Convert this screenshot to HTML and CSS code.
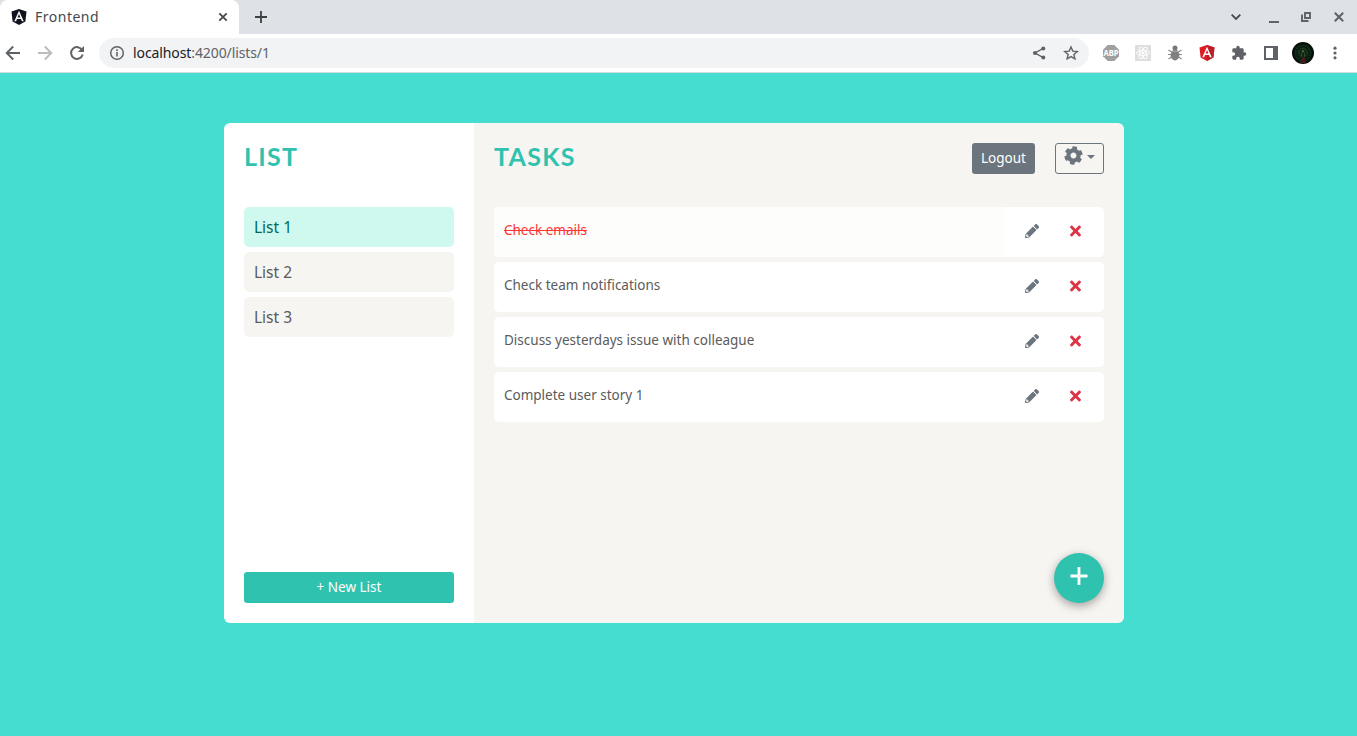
FILE: index.html
```html
<!DOCTYPE html>
<html lang="en">
<head>
<meta charset="utf-8">
<title>Frontend</title>
<link rel="stylesheet" href="styles.css">
</head>
<body>
<svg class="defs" width="0" height="0" aria-hidden="true">
  <symbol id="pencil" viewBox="0 0 512 512"><path d="M497.900 142.100l-46.100 46.100c-4.700 4.700-12.300 4.700-17 0l-111-111c-4.700-4.700-4.700-12.300 0-17l46.100-46.100c18.700-18.700 49.100-18.700 67.900 0l60.100 60.100c18.800 18.700 18.800 49.100 0 67.900zM284.200 99.800L21.600 362.400.4 483.900c-2.900 16.400 11.400 30.600 27.800 27.800l121.500-21.300 262.600-262.600c4.700-4.700 4.700-12.300 0-17l-111-111c-4.800-4.700-12.400-4.700-17.100 0zM88 424h48v36.300l-64.500 11.300-31.100-31.100L51.700 376H88v48z"/></symbol>
  <symbol id="times" viewBox="0 0 352 512"><path d="M242.720 256l100.070-100.070c12.280-12.280 12.280-32.190 0-44.480l-22.240-22.240c-12.280-12.280-32.190-12.280-44.480 0L176 189.280 75.930 89.210c-12.280-12.280-32.190-12.280-44.480 0L9.210 111.450c-12.280 12.280-12.280 32.190 0 44.480L109.280 256 9.210 356.070c-12.280 12.280-12.280 32.190 0 44.480l22.240 22.240c12.280 12.280 32.200 12.280 44.480 0L176 322.720l100.070 100.070c12.280 12.280 32.200 12.280 44.480 0l22.240-22.240c12.280-12.280 12.280-32.190 0-44.480L242.720 256z"/></symbol>
</svg>

<header class="browser">
  <div class="tab-strip">
    <div class="tab">
      <svg class="favicon" viewBox="0 0 16 16" width="16" height="16"><path d="M8 0l7.5 2.6-1.1 10L8 16l-6.4-3.4-1.1-10z" fill="#11131f"/><path d="M8 1.8L3.3 12.3h1.8l.9-2.3h4l.9 2.3h1.8zm0 3.3l1.4 3.4H6.6z" fill="#fff"/></svg>
      <span class="tab-title">Frontend</span>
      <svg class="tab-close" viewBox="0 0 10 10" width="10" height="10"><path d="M1.3 1.3l7.4 7.4M8.7 1.3L1.3 8.7" stroke="#45494d" stroke-width="1.8"/></svg>
    </div>
    <svg class="new-tab" viewBox="0 0 12 12" width="12" height="12"><path d="M6 0v12M0 6h12" stroke="#3c4043" stroke-width="1.8"/></svg>
    <div class="window-controls">
      <svg width="12" height="16" viewBox="0 0 12 16"><path d="M1.7 5.7L6 10l4.3-4.3" fill="none" stroke="#45494d" stroke-width="1.8"/></svg>
      <svg width="12" height="16" viewBox="0 0 12 16"><path d="M1 13h10" stroke="#5f6368" stroke-width="2"/></svg>
      <svg width="12" height="16" viewBox="0 0 12 16"><path d="M5 4h5v5H5zM2 5.500v6.500h6.500" fill="none" stroke="#5f6368" stroke-width="1.9"/></svg>
      <svg width="12" height="16" viewBox="0 0 12 16"><path d="M1.8 3.8l8.4 8.4M10.2 3.8l-8.4 8.4" stroke="#5f6368" stroke-width="2"/></svg>
    </div>
  </div>
  <div class="toolbar">
    <div class="nav">
      <svg width="16" height="16" viewBox="0 0 16 16"><path d="M15 8H2M8.2 1.5L1.7 8l6.5 6.5" fill="none" stroke="#5f6368" stroke-width="1.9"/></svg>
      <svg width="16" height="16" viewBox="0 0 16 16"><path d="M1 8h13M7.8 1.5L14.3 8l-6.5 6.5" fill="none" stroke="#babcbe" stroke-width="1.9"/></svg>
      <svg width="16" height="16" viewBox="0 0 16 16"><path d="M13.2 5.2A5.9 5.9 0 1 0 13.7 9.5" fill="none" stroke="#5f6368" stroke-width="2"/><path d="M15 .9v6.2H8.8z" fill="#5f6368"/></svg>
    </div>
    <div class="omnibox">
      <svg width="16" height="16" viewBox="0 0 16 16"><circle cx="8" cy="8" r="6.3" fill="none" stroke="#5f6368" stroke-width="1.5"/><path d="M8 7v4.4M8 4.2v1.7" stroke="#5f6368" stroke-width="1.6"/></svg>
      <span class="url"><b>localhost</b>:4200/lists/1</span>
      <svg class="share" width="16" height="16" viewBox="0 0 16 16"><path d="M12.3 3.3L4 8l8.3 4.7" fill="none" stroke="#5f6368" stroke-width="1.4"/><circle cx="12.3" cy="3.4" r="2" fill="#5f6368"/><circle cx="4" cy="8" r="2.1" fill="#5f6368"/><circle cx="12.3" cy="12.6" r="2" fill="#5f6368"/></svg>
      <svg width="16" height="16" viewBox="0 0 16 16"><path d="M8 2l1.800 4.100 4.500.4-3.400 3 1 4.400L8 11.600l-3.900 2.300 1-4.400-3.400-3 4.500-.4z" fill="none" stroke="#5f6368" stroke-width="1.4"/></svg>
    </div>
    <div class="extensions">
      <svg width="16" height="16" viewBox="0 0 16 16"><path d="M4.700 0h6.600L16 4.700v6.600L11.300 16H4.700L0 11.300V4.700z" fill="#a0a0a0"/><text class="abp" x="8" y="11.200" text-anchor="middle" textLength="15" lengthAdjust="spacingAndGlyphs">ABP</text></svg>
      <svg width="16" height="16" viewBox="0 0 16 16"><path d="M0 0h16v16H0z" fill="#dedede"/><g fill="none" stroke="#fff" stroke-width=".9"><ellipse cx="8" cy="8" rx="6.5" ry="2.5"/><ellipse cx="8" cy="8" rx="6.5" ry="2.5" transform="rotate(60 8 8)"/><ellipse cx="8" cy="8" rx="6.5" ry="2.5" transform="rotate(120 8 8)"/></g><circle cx="8" cy="8" r="1.3" fill="#fff"/></svg>
      <svg width="16" height="16" viewBox="0 0 16 16"><path d="M4.500 7L1.500 5M4 9.500H1M4.500 12l-3 2M11.500 7l3-2M12 9.500h3M11.500 12l3 2" stroke="#8a8a8a" stroke-width="1.200"/><circle cx="8" cy="3" r="2.500" fill="#777"/><ellipse cx="8" cy="10" rx="4.400" ry="5.400" fill="#808080"/><path d="M4.600 6.200h6.800" stroke="#aaa"/></svg>
      <svg width="16" height="16" viewBox="0 0 16 16"><path d="M8 0l7.5 2.6-1.1 10L8 16l-6.4-3.4-1.1-10z" fill="#dd1b24"/><path d="M8 0l7.5 2.6-1.1 10L8 16z" fill="#b9202b"/><path d="M8 1.8L3.3 12.3h1.8l.9-2.3h4l.9 2.3h1.8zm0 3.3l1.4 3.4H6.6z" fill="#fff"/></svg>
      <svg width="16" height="16" viewBox="0 0 24 24"><path d="M20.5 11H19V7c0-1.1-.9-2-2-2h-4V3.500a2.500 2.500 0 0 0-5 0V5H4c-1.100 0-2 .9-2 2v3.800h1.500a2.700 2.700 0 0 1 0 5.400H2V20c0 1.100.9 2 2 2h3.800v-1.500a2.700 2.700 0 0 1 5.400 0V22H17c1.100 0 2-.9 2-2v-4h1.500a2.500 2.500 0 0 0 0-5z" fill="#5f6368"/></svg>
      <svg width="16" height="16" viewBox="0 0 16 16"><path d="M1 1h14v14H1zM3 3v10h7V3z" fill="#5f6368" fill-rule="evenodd"/></svg>
    </div>
    <svg class="avatar" width="22" height="22" viewBox="0 0 22 22"><circle cx="11" cy="11" r="11" fill="#06100a"/><circle cx="11" cy="11" r="6.500" fill="#0c2210"/><circle cx="11" cy="11" r="7.600" fill="none" stroke="#17351b" stroke-width="2" stroke-dasharray="1.200 .8"/><circle cx="11" cy="10.500" r="4.200" fill="none" stroke="#1d4524"/><path d="M9.300 14.500L9.800 9q1.200-2 2.400 0l.5 5.500z" fill="#4d7049"/><path d="M10.200 15v-4.500q.8-1.500 1.600 0V15z" fill="#071009"/><path d="M8 21l2-5 1-1.500 2 2 1 4.500z" fill="#4a1a1c"/></svg>
    <svg class="menu" width="4" height="16" viewBox="0 0 4 16"><g fill="#5f6368"><circle cx="2" cy="3.200" r="1.600"/><circle cx="2" cy="8" r="1.600"/><circle cx="2" cy="12.800" r="1.600"/></g></svg>
  </div>
</header>

<main class="page">
  <section class="card">
    <aside class="sidebar">
      <h1 class="title">LIST</h1>
      <nav class="lists">
        <a class="list-item active">List 1</a>
        <a class="list-item">List 2</a>
        <a class="list-item">List 3</a>
      </nav>
      <button class="btn new-list">+ New List</button>
    </aside>
    <div class="content">
      <div class="content-head">
        <h1 class="title">TASKS</h1>
        <button class="btn logout">Logout</button>
        <button class="btn settings">
          <svg width="19" height="19" viewBox="0 0 512 512"><path fill="#6c757d" transform="rotate(9 256 256)" d="M487.4 315.7l-42.6-24.6c4.3-23.2 4.3-47 0-70.2l42.6-24.6c4.9-2.8 7.1-8.6 5.5-14-11.1-35.6-30-67.8-54.7-94.6-3.8-4.1-10-5.1-14.8-2.3L380.8 110c-17.9-15.4-38.5-27.3-60.8-35.1V25.8c0-5.6-3.9-10.5-9.4-11.7-36.7-8.2-74.3-7.8-109.2 0-5.5 1.2-9.4 6.1-9.4 11.7V75c-22.2 7.9-42.8 19.8-60.8 35.1L88.7 85.5c-4.9-2.8-11-1.9-14.8 2.3-24.7 26.7-43.6 58.9-54.7 94.6-1.7 5.4.6 11.2 5.5 14L67.3 221c-4.3 23.2-4.3 47 0 70.2l-42.6 24.6c-4.9 2.8-7.1 8.6-5.5 14 11.1 35.6 30 67.8 54.7 94.6 3.8 4.1 10 5.1 14.8 2.3l42.6-24.6c17.9 15.4 38.5 27.3 60.8 35.1v49.2c0 5.6 3.9 10.5 9.4 11.7 36.7 8.2 74.3 7.8 109.2 0 5.5-1.2 9.4-6.1 9.4-11.7v-49.2c22.2-7.9 42.8-19.8 60.8-35.1l42.6 24.6c4.9 2.8 11 1.9 14.8-2.3 24.7-26.7 43.6-58.9 54.7-94.6 1.5-5.5-.7-11.3-5.6-14.1zM256 336c-44.1 0-80-35.9-80-80s35.9-80 80-80 80 35.9 80 80-35.9 80-80 80z"/></svg>
          <span class="caret"></span>
        </button>
      </div>
      <div class="tasks">
        <div class="task done"><span class="task-name">Check emails</span><div class="actions"><svg class="edit"><use href="#pencil"/></svg><svg class="delete"><use href="#times"/></svg></div></div>
        <div class="task"><span class="task-name">Check team notifications</span><div class="actions"><svg class="edit"><use href="#pencil"/></svg><svg class="delete"><use href="#times"/></svg></div></div>
        <div class="task"><span class="task-name">Discuss yesterdays issue with colleague</span><div class="actions"><svg class="edit"><use href="#pencil"/></svg><svg class="delete"><use href="#times"/></svg></div></div>
        <div class="task"><span class="task-name">Complete user story 1</span><div class="actions"><svg class="edit"><use href="#pencil"/></svg><svg class="delete"><use href="#times"/></svg></div></div>
      </div>
      <button class="fab" aria-label="Add task"><svg width="18" height="18" viewBox="0 0 18 18"><path d="M9 0v18M.5 9h17" stroke="#fff" stroke-width="2.800"/></svg></button>
    </div>
  </section>
</main>
</body>
</html>
```
FILE: styles.css
```css
* { box-sizing: border-box; }
body {
  margin: 0;
  height: 736px;
  overflow: hidden;
  display: flex;
  flex-direction: column;
  font-family: "Noto Sans", "Open Sans", sans-serif;
  color: #5b5b5b;
  background: #44ddd0;
}
svg { display: block; flex: none; }
.defs { position: absolute; }
button { font: inherit; margin: 0; padding: 0; border: 0; }

.browser { flex: none; height: 73px; background: #fff; border-bottom: 1px solid #d5dbdc; }
.tab-strip { display: flex; align-items: center; height: 34px; background: #dee1e6; }
.tab {
  display: flex;
  align-items: center;
  width: 239px;
  height: 34px;
  padding: 0 11px;
  background: #fff;
  border-radius: 8px 8px 0 0;
}
.tab-title { margin-left: 8px; padding-bottom: 2px; font-size: 14px; letter-spacing: .5px; color: #45494d; }
.tab-close { margin-left: auto; }
.new-tab { margin-left: 16px; }
.window-controls { display: flex; gap: 20px; margin-left: auto; padding-right: 12px; }
.window-controls svg:first-child { margin-right: 6px; }
.window-controls svg:nth-child(-n+3) { transform: translateX(-1px); }

.toolbar { display: flex; align-items: center; height: 38px; }
.nav { display: flex; gap: 16px; width: 99px; padding-left: 5px; }
.omnibox {
  display: flex;
  align-items: center;
  width: 990px;
  height: 30px;
  padding: 0 10px;
  border-radius: 15px;
  background: #f1f3f4;
}
.url { margin-left: 8px; padding-bottom: 2px; font-size: 14px; letter-spacing: -.1px; color: #5f6368; }
.url b { font-weight: 400; color: #202124; }
.share { margin-left: auto; margin-right: 16px; }
.extensions { display: flex; gap: 16px; margin-left: 14px; }
.abp { font: 700 8.500px "Noto Sans", sans-serif; fill: #fff; }
.avatar { margin-left: 13px; }
.menu { margin-left: 19px; }

.page { flex: 1; padding: 50px 0 0 224px; }
.card { display: flex; width: 900px; height: 500px; border-radius: 6px; overflow: hidden; }
.sidebar { display: flex; flex-direction: column; width: 250px; padding: 20px; background: #fff; }
.title {
  margin: 0;
  height: 64px;
  font: 700 25px/27px Lato, sans-serif;
  letter-spacing: 1.300px;
  color: #2fc2ae;
}
.lists { display: flex; flex-direction: column; gap: 5px; flex: 1; }
.list-item {
  height: 40px;
  padding: 0 10px;
  border-radius: 5px;
  background: #f6f5f1;
  font-size: 15.500px;
  line-height: 40px;
}
.list-item.active { background: #cff8ee; color: #006b5b; }
.btn { height: 31px; padding-bottom: 2px; border-radius: 3px; font-size: 13.500px; color: #fff; }
.new-list { background: #2fc2ae; }

.content {
  display: flex;
  flex-direction: column;
  flex: 1;
  padding: 20px;
  background: #f6f5f1;
}
.content-head { display: flex; height: 64px; }
.content-head .title { flex: 1; }
.logout { width: 63px; background: #6c757d; }
.settings {
  display: flex;
  align-items: flex-start;
  gap: 4px;
  width: 49px;
  margin-left: 20px;
  padding: 2px 8px;
  border: 1px solid #6c757d;
  background: transparent;
}
.caret { margin-top: 9px; border: 4px solid transparent; border-top-color: #6c757d; border-bottom: 0; }
.tasks { display: flex; flex-direction: column; gap: 5px; flex: 1; }
.task { display: flex; height: 50px; border-radius: 5px; background: #fff; overflow: hidden; }
.task-name { flex: 1; padding: 0 10px; font-size: 13.500px; line-height: 46px; }
.done .task-name { color: #ff3535; text-decoration: line-through; background: #fdfdfb; }
.actions { display: flex; align-items: center; width: 100px; padding: 0 0 3px 21px; }
.edit { width: 14px; height: 14px; fill: #6c757d; }
.delete { width: 11px; height: 16px; margin-left: 30.500px; fill: #dc3545; }
.fab {
  display: flex;
  align-items: center;
  justify-content: center;
  align-self: flex-end;
  width: 50px;
  height: 50px;
  padding-bottom: 4px;
  border-radius: 50%;
  background: #2fc2ae;
  box-shadow: 0 3px 10px rgba(0, 0, 0, .35);
}
```
